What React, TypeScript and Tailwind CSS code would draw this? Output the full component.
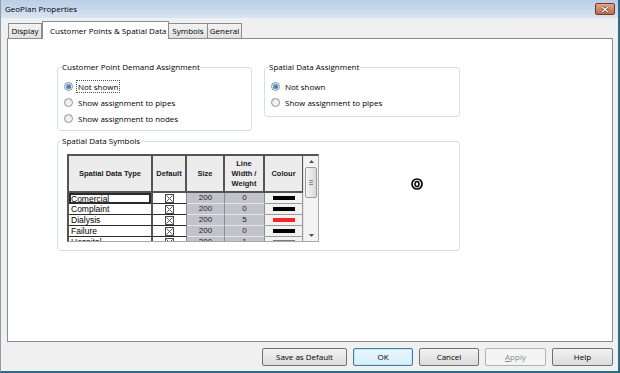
import React from "react";

const rows = [
  { name: "Comercial", size: "200", width: "0", colour: "#000000" },
  { name: "Complaint", size: "200", width: "0", colour: "#000000" },
  { name: "Dialysis", size: "200", width: "5", colour: "#ff2424" },
  { name: "Failure", size: "200", width: "0", colour: "#000000" },
  { name: "Hospital", size: "200", width: "1", colour: "#7a7a7a" },
];

function Radio({ checked }: { checked?: boolean }) {
  return (
    <span className="w-[9px] h-[9px] rounded-full border border-[#8e8f8f] bg-linear-to-br from-[#e6e6e6] to-[#fbfbfb] flex items-center justify-center shrink-0">
      {checked && <span className="w-[5px] h-[5px] rounded-full bg-linear-to-br from-[#6fb2e8] to-[#1c5fa8]" />}
    </span>
  );
}

function RadioRow({ label, checked, focus }: { label: string; checked?: boolean; focus?: boolean }) {
  return (
    <div className="h-[16px] flex items-center ml-[3px] gap-[4px]">
      <Radio checked={checked} />
      <span className={"leading-[11px] px-[1px] " + (focus ? "outline outline-1 outline-dotted outline-[#555]" : "")}>
        {label}
      </span>
    </div>
  );
}

function GroupBox({ title, className, children }: { title: string; className?: string; children: React.ReactNode }) {
  return (
    <fieldset className={"border border-[#d5dfe5] rounded-[3px] px-[3px] " + (className ?? "")}>
      <legend className="px-[1px] leading-[12px]">{title}</legend>
      {children}
    </fieldset>
  );
}

function CheckGlyph() {
  return (
    <svg width="9" height="9" viewBox="0 0 9 9">
      <rect x="0.5" y="0.5" width="8" height="8" fill="white" stroke="#4a4a4a" />
      <path d="M1.5 1.5 L7.5 7.5 M7.5 1.5 L1.5 7.5" stroke="#4a4a4a" strokeWidth="0.9" />
    </svg>
  );
}

function Button({ label, w, primary, disabled }: { label: React.ReactNode; w: string; primary?: boolean; disabled?: boolean }) {
  let cls = "border-[#707070] bg-linear-to-b from-[#f2f2f2] to-[#dcdcdc] text-black";
  if (primary) cls = "border-[#3c7fb1] bg-linear-to-b from-[#eaf6fd] to-[#d7eefb] text-black shadow-[inset_0_0_0_1px_#c4e5f6]";
  if (disabled) cls = "border-[#adb2b5] bg-[#f4f4f4] text-[#8a8a8a]";
  return (
    <div className={"h-[18px] rounded-[2px] border flex items-center justify-center " + w + " " + cls}>
      {label}
    </div>
  );
}

export default function App() {
  return (
    <div className="w-[620px] h-[373px] bg-[#f0f0f0] flex flex-col border-l border-l-[#8f9cab] border-r-2 border-r-[#2d6b80] border-b-2 border-b-[#2d6b80] text-[8px] text-black overflow-hidden font-['Open_Sans',sans-serif]">
      {/* title bar */}
      <div className="h-[18px] shrink-0 flex items-center justify-between pl-[4px] pr-[3px] bg-linear-to-b from-[#b9cde6] to-[#d8e4f1]">
        <span className="leading-none">GeoPlan Properties</span>
        <div className="w-[20px] h-[12px] rounded-[2px] border border-[#6e3b28] bg-linear-to-b from-[#e2a58c] to-[#bf6a4a] flex items-center justify-center">
          <svg width="8" height="7" viewBox="0 0 8 7">
            <path d="M1 1 L7 6 M7 1 L1 6" stroke="#5a2a1a" strokeWidth="2.4" />
            <path d="M1 1 L7 6 M7 1 L1 6" stroke="white" strokeWidth="1.4" />
          </svg>
        </div>
      </div>

      {/* tabs */}
      <div className="flex items-end h-[17px] mt-[3px] pl-[7px] shrink-0">
        <div className="w-[34px] h-[15px] border border-b-0 border-[#898c95] bg-linear-to-b from-[#f3f3f3] to-[#e1e1e1] flex items-center justify-center">Display</div>
        <div className="relative z-10 w-[127px] h-[18px] -mb-px border border-b-0 border-[#898c95] bg-white flex items-center pl-[7px] whitespace-nowrap">Customer Points &amp; Spatial Data</div>
        <div className="w-[39px] h-[15px] border border-b-0 border-l-0 border-[#898c95] bg-linear-to-b from-[#f3f3f3] to-[#e1e1e1] flex items-center justify-center">Symbols</div>
        <div className="w-[34px] h-[15px] border border-b-0 border-l-0 border-[#898c95] bg-linear-to-b from-[#f3f3f3] to-[#e1e1e1] flex items-center justify-center">General</div>
      </div>

      {/* tab panel */}
      <div className="ml-[6px] mr-[5px] h-[304px] shrink-0 bg-white border border-[#898c95] pt-[22px] pl-[49px]">
        <div className="flex items-start gap-[12px]">
          <GroupBox title="Customer Point Demand Assignment" className="w-[195px] pb-[4px]">
            <div className="mt-[5px]">
              <RadioRow label="Not shown" checked focus />
              <RadioRow label="Show assignment to pipes" />
              <RadioRow label="Show assignment to nodes" />
            </div>
          </GroupBox>
          <GroupBox title="Spatial Data Assignment" className="w-[196px] pb-[6px]">
            <div className="mt-[5px]">
              <RadioRow label="Not shown" checked />
              <RadioRow label="Show assignment to pipes" />
            </div>
          </GroupBox>
        </div>

        <GroupBox title="Spatial Data Symbols" className="w-[403px] mt-[4px] pb-[8px]">
          <div className="flex items-start">
            <div className="flex ml-[6px] mt-[7px] h-[88px] w-[252px] border-t-2 border-l-2 border-[#555] border-b border-r border-b-[#a8a8a8] border-r-[#a8a8a8] font-['Liberation_Sans',sans-serif] overflow-hidden">
              <div className="w-[234px] flex flex-col">
                {/* header */}
                <div className="grid grid-cols-[84px_34px_38px_40px_38px] h-[37px] shrink-0 border-b-2 border-[#555] bg-[#ececec] font-bold text-[7.5px] leading-[10px] text-[#1a1a1a]">
                  <div className="border-r-2 border-[#555] flex items-center justify-center">Spatial Data Type</div>
                  <div className="border-r-2 border-[#555] flex items-center justify-center">Default</div>
                  <div className="border-r-2 border-[#555] flex items-center justify-center">Size</div>
                  <div className="border-r-2 border-[#555] flex items-center justify-center text-center">Line<br />Width /<br />Weight</div>
                  <div className="border-r border-[#555] flex items-center justify-center">Colour</div>
                </div>
                {/* body */}
                {rows.map((r, i) => (
                  <div key={r.name} className="grid grid-cols-[84px_34px_38px_40px_38px] h-[11px] shrink-0 text-[8.5px] leading-[10px]">
                    <div className={"bg-white flex items-center pl-[2px] overflow-hidden border-b border-r-2 border-b-[#2a2a2a] border-r-[#555] " + (i === 0 ? "shadow-[inset_0_0_0_2px_#2a2a2a] border-b-0 h-[11px]" : "")}>
                      {r.name}
                    </div>
                    <div className="bg-white border-b border-r border-b-[#2a2a2a] border-r-[#8a8a8a] flex items-center justify-center overflow-hidden">
                      <CheckGlyph />
                    </div>
                    <div className="bg-[#c2c2ca] border-b border-r border-b-[#e4e4e4] border-r-[#8c8c8c] flex items-center justify-center text-[8px] text-[#222] overflow-hidden">{r.size}</div>
                    <div className="bg-[#c2c2ca] border-b border-r border-b-[#e4e4e4] border-r-[#8c8c8c] flex items-center justify-center text-[8px] text-[#222] overflow-hidden">{r.width}</div>
                    <div className="bg-[#f2f2f2] border-b border-r border-b-[#9a9a9a] border-r-[#9a9a9a] flex items-center justify-center">
                      <span className="w-[22px] h-[4px]" style={{ backgroundColor: r.colour }} />
                    </div>
                  </div>
                ))}
              </div>
              {/* scrollbar */}
              <div className="w-[15px] flex flex-col bg-[#f3f3f3] border-l border-[#e2e2e2]">
                <div className="h-[11px] flex items-center justify-center">
                  <svg width="5" height="3" viewBox="0 0 5 3"><path d="M0 3 L2.5 0 L5 3 Z" fill="#505050" /></svg>
                </div>
                <div className="h-[31px] mx-[1px] rounded-[2px] border border-[#9b9b9b] bg-linear-to-r from-[#f4f4f4] to-[#dadada] flex flex-col items-center justify-center gap-[1px]">
                  <span className="w-[4px] h-px bg-[#8a8a8a]" />
                  <span className="w-[4px] h-px bg-[#8a8a8a]" />
                  <span className="w-[4px] h-px bg-[#8a8a8a]" />
                </div>
                <div className="flex-1" />
                <div className="h-[12px] flex items-center justify-center">
                  <svg width="5" height="3" viewBox="0 0 5 3"><path d="M0 0 L2.5 3 L5 0 Z" fill="#505050" /></svg>
                </div>
              </div>
            </div>
            <svg className="ml-[92px] mt-[31px]" width="12" height="12" viewBox="0 0 12 12">
              <circle cx="6" cy="6" r="5" fill="none" stroke="#000" strokeWidth="1.7" />
              <ellipse cx="6" cy="6" rx="2" ry="2.6" fill="none" stroke="#000" strokeWidth="1.5" />
            </svg>
          </div>
        </GroupBox>
      </div>

      {/* buttons */}
      <div className="flex justify-end gap-[6px] mt-[6px] pr-[5px] shrink-0">
        <Button label="Save as Default" w="w-[85px]" />
        <Button label="OK" w="w-[60px]" primary />
        <Button label="Cancel" w="w-[60px]" />
        <Button label={<span><span className="underline">A</span>pply</span>} w="w-[61px]" disabled />
        <Button label="Help" w="w-[61px]" />
      </div>
    </div>
  );
}
